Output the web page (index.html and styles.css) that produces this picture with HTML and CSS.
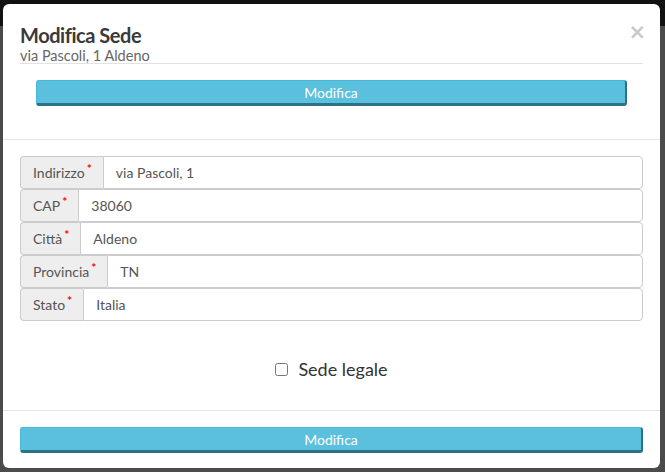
FILE: index.html
```html
<!DOCTYPE html>
<html lang="it">
<head>
  <meta charset="UTF-8">
  <title>Modifica Sede</title>
  <link rel="stylesheet" href="styles.css">
</head>
<body>

  <div class="modal">
    <!-- Header -->
    <div class="modal-header">
      <button class="close" type="button">&times;</button>
      <div class="modal-title">
        <h4>Modifica Sede</h4>
        <div class="subtitle">via Pascoli, 1 Aldeno</div>
      </div>
      <button class="btn-info header-btn" type="button">Modifica</button>
    </div>

    <!-- Body -->
    <div class="modal-body">
      <div class="input-group">
        <span class="addon">Indirizzo<span class="req">*</span></span>
        <input class="field" type="text" value="via Pascoli, 1">
      </div>
      <div class="input-group">
        <span class="addon">CAP<span class="req">*</span></span>
        <input class="field" type="text" value="38060">
      </div>
      <div class="input-group">
        <span class="addon">Città<span class="req">*</span></span>
        <input class="field" type="text" value="Aldeno">
      </div>
      <div class="input-group">
        <span class="addon">Provincia<span class="req">*</span></span>
        <input class="field" type="text" value="TN">
      </div>
      <div class="input-group">
        <span class="addon">Stato<span class="req">*</span></span>
        <input class="field" type="text" value="Italia">
      </div>

      <label class="check">
        <input type="checkbox"> Sede legale
      </label>
    </div>

    <!-- Footer -->
    <div class="modal-footer">
      <button class="btn-info" type="button">Modifica</button>
    </div>
  </div>

</body>
</html>
```

FILE: styles.css
```css
body {
  margin: 0;
  padding: 0;
  font-family: Lato, "Open Sans", sans-serif;
  background: linear-gradient(#111 0, #111 26px, #4b4b4b 26px);
  height: 472px;
  overflow: hidden;
}

/* Modal box */
.modal {
  position: relative;
  margin: 4px 0 0 3px;
  width: 657px;
  height: 464px;
  background: #fff;
  border-radius: 6px;
  box-sizing: border-box;
  color: #333;
}

.modal-header {
  padding: 20px 17px 33px;
  border-bottom: 1px solid #e5e5e5;
}

.close {
  position: absolute;
  top: 18px;
  right: 14px;
  padding: 0;
  border: none;
  background: none;
  font-family: "DejaVu Sans", sans-serif;
  font-size: 21px;
  line-height: 20px;
  font-weight: bold;
  color: #c9c9c9;
  cursor: pointer;
}

.modal-title {
  border-bottom: 1px solid #e2e2e2;
}

.modal-title h4 {
  margin: 0;
  font-size: 20px;
  line-height: 22px;
  font-weight: bold;
  letter-spacing: -0.45px;
  color: #3a3a3a;
}

.subtitle {
  margin-top: 2px;
  font-size: 14.5px;
  line-height: 15px;
  color: #666;
}

/* Buttons */
.btn-info {
  display: block;
  width: 100%;
  height: 26px;
  padding: 0;
  background: #5bc0de;
  color: #fff;
  font-family: Lato, sans-serif;
  font-size: 14px;
  border: 1px solid #46b8da;
  border-right: 2px solid #2c7185;
  border-bottom: 3px solid #2c7185;
  border-radius: 3px;
  box-sizing: border-box;
  cursor: pointer;
}

.header-btn {
  margin: 16px 16px 0;
  width: calc(100% - 32px);
}

/* Body */
.modal-body {
  padding: 16px 17px 29px;
  border-bottom: 1px solid #e5e5e5;
}

.input-group {
  display: flex;
  height: 33px;
  font-size: 14px;
}

.addon {
  display: flex;
  align-items: center;
  padding: 0 11px 0 12px;
  background: #eee;
  color: #555;
  border: 1px solid #ccc;
  border-right: none;
  border-radius: 4px 0 0 4px;
}

.req {
  color: #f00;
  font-weight: bold;
  font-size: 12px;
  margin-left: 2px;
  position: relative;
  top: -4px;
}

.field {
  flex: 1;
  min-width: 0;
  padding: 0 12px;
  border: 1px solid #ccc;
  border-radius: 0 4px 4px 0;
  font-family: Lato, sans-serif;
  font-size: 14px;
  color: #555;
  background: #fff;
  box-sizing: border-box;
}

.check {
  display: flex;
  justify-content: center;
  align-items: center;
  gap: 10px;
  margin-top: 36px;
  font-size: 18px;
  line-height: 24px;
  color: #333;
}

.check input {
  margin: 0;
  width: 13px;
  height: 13px;
}

/* Footer */
.modal-footer {
  padding: 16px 17px 15px;
}
```
